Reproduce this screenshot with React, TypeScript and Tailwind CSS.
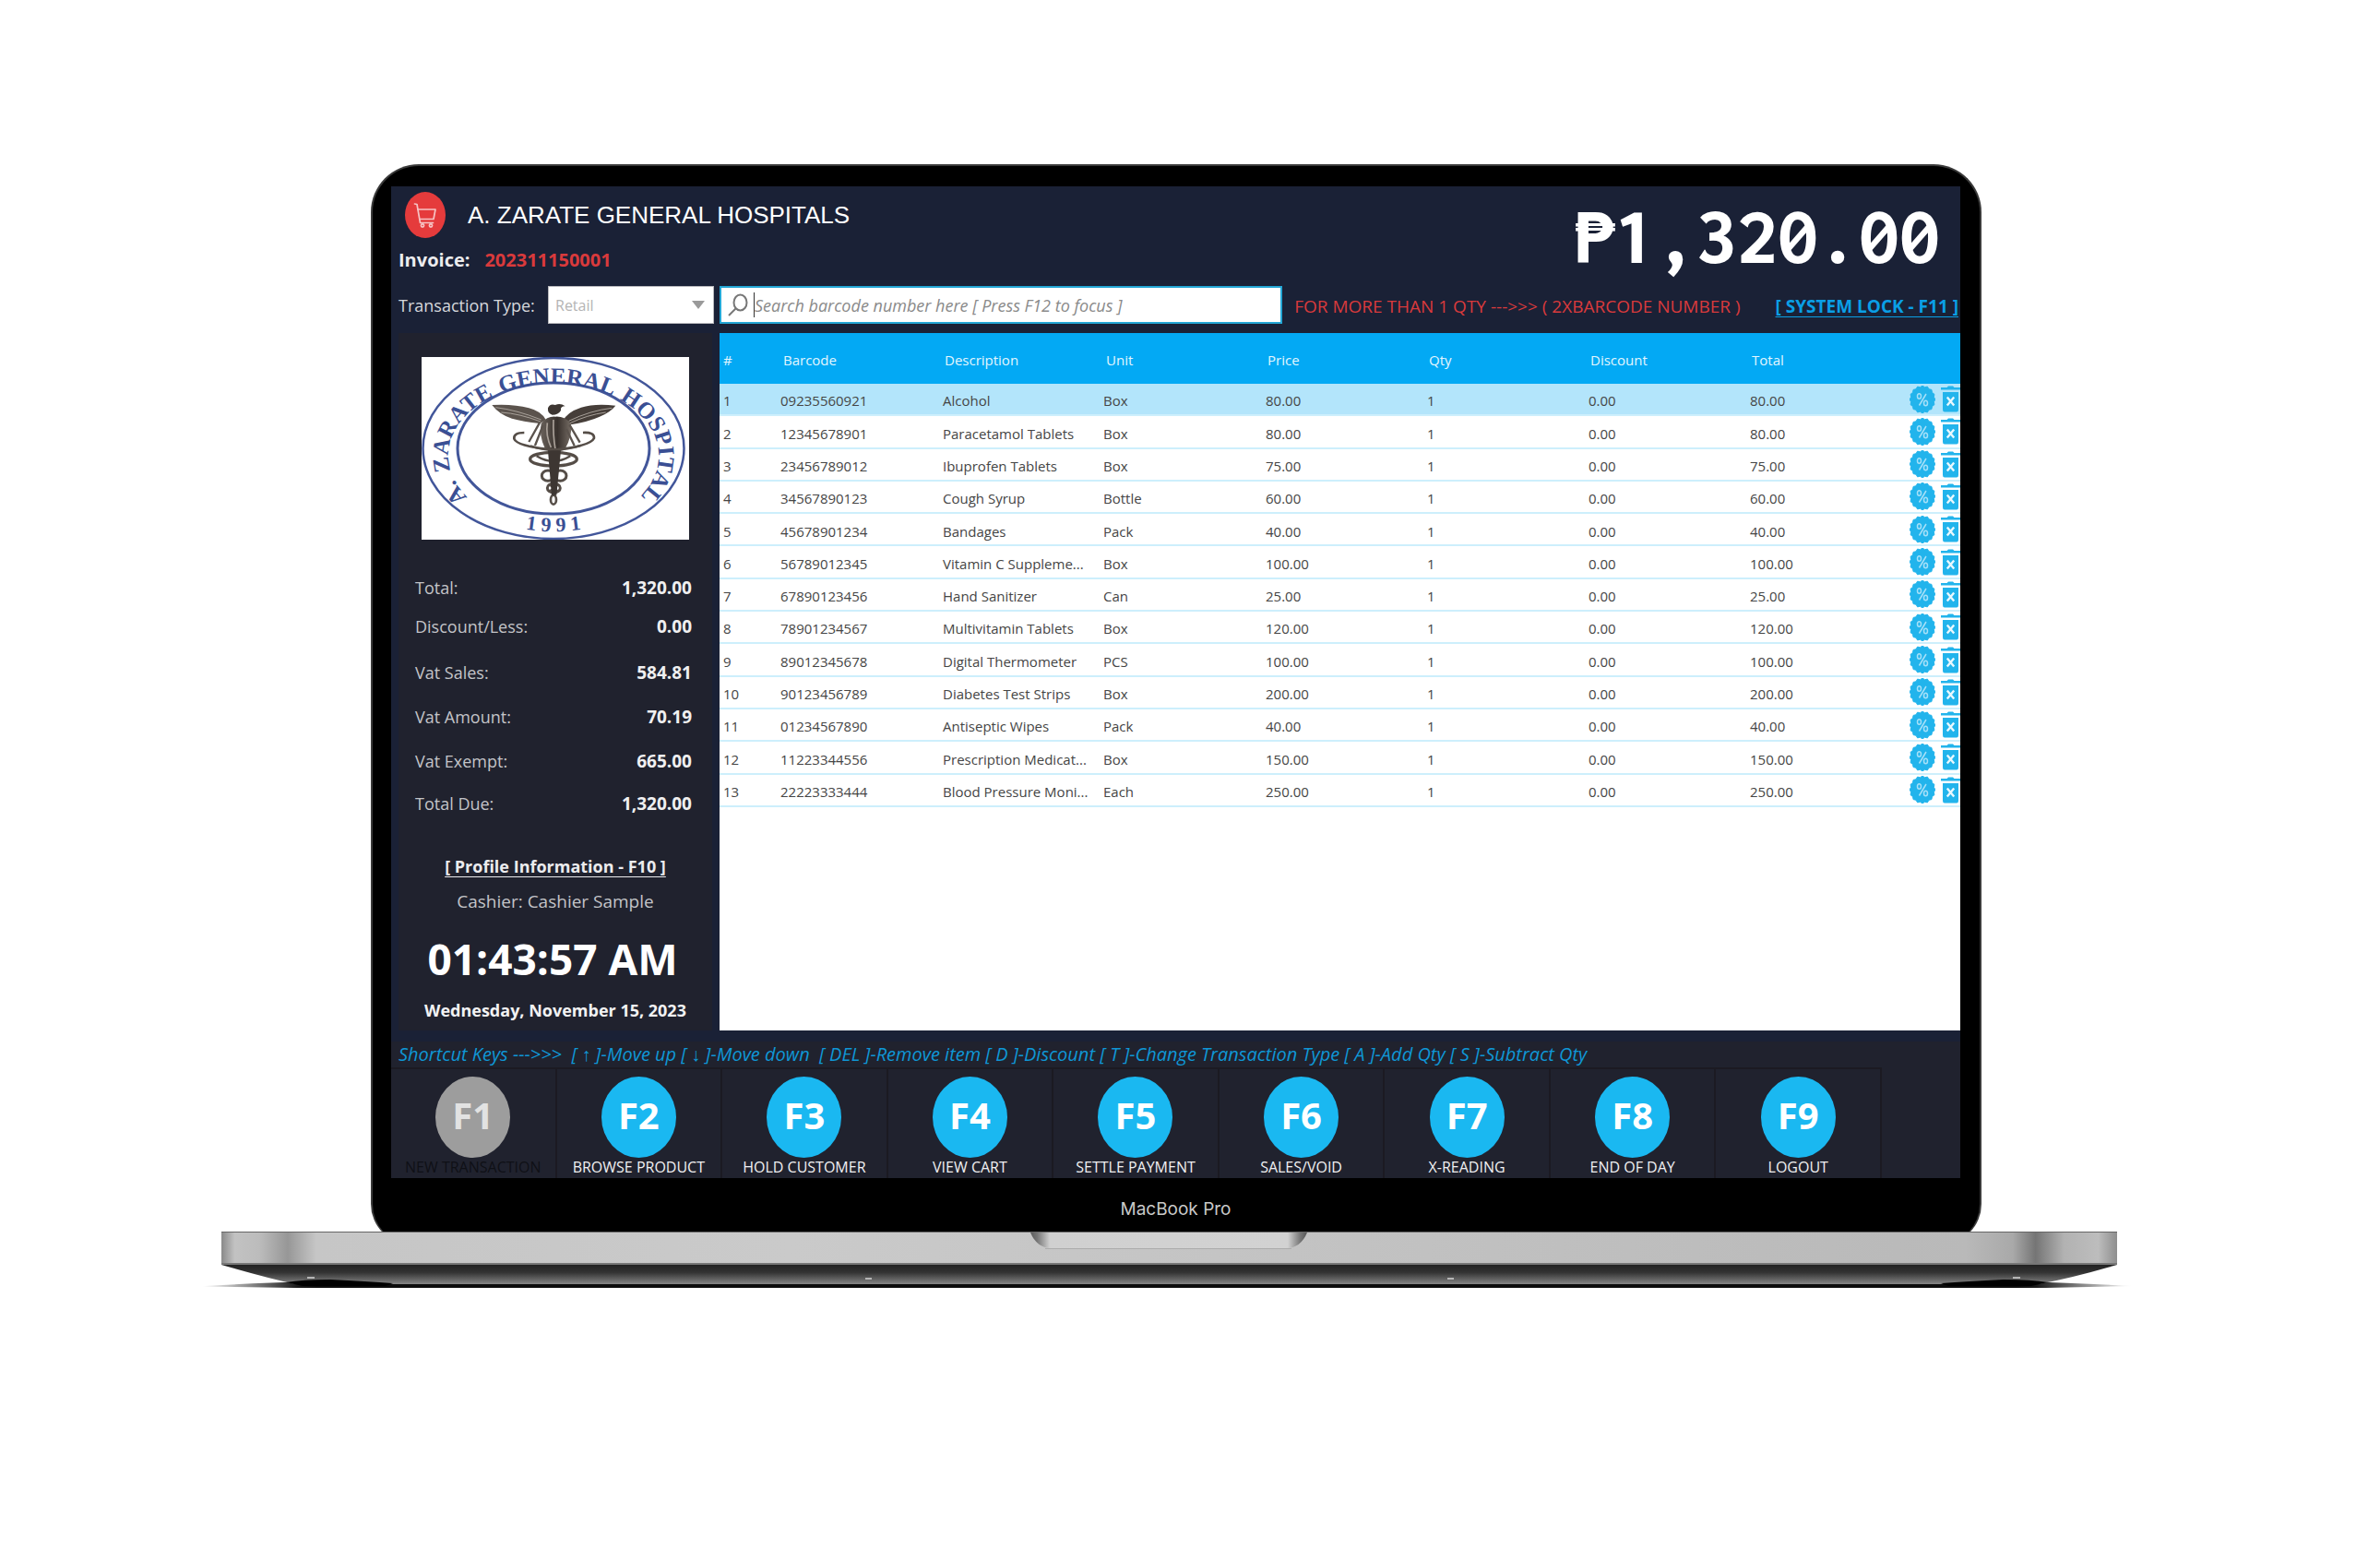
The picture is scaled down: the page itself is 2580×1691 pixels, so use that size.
import React from "react";

type Item = {
  barcode: string;
  description: string;
  unit: string;
  price: string;
};

const items: Item[] = [
  { barcode: "09235560921", description: "Alcohol", unit: "Box", price: "80.00" },
  { barcode: "12345678901", description: "Paracetamol Tablets", unit: "Box", price: "80.00" },
  { barcode: "23456789012", description: "Ibuprofen Tablets", unit: "Box", price: "75.00" },
  { barcode: "34567890123", description: "Cough Syrup", unit: "Bottle", price: "60.00" },
  { barcode: "45678901234", description: "Bandages", unit: "Pack", price: "40.00" },
  { barcode: "56789012345", description: "Vitamin C Suppleme...", unit: "Box", price: "100.00" },
  { barcode: "67890123456", description: "Hand Sanitizer", unit: "Can", price: "25.00" },
  { barcode: "78901234567", description: "Multivitamin Tablets", unit: "Box", price: "120.00" },
  { barcode: "89012345678", description: "Digital Thermometer", unit: "PCS", price: "100.00" },
  { barcode: "90123456789", description: "Diabetes Test Strips", unit: "Box", price: "200.00" },
  { barcode: "01234567890", description: "Antiseptic Wipes", unit: "Pack", price: "40.00" },
  { barcode: "11223344556", description: "Prescription Medicat...", unit: "Box", price: "150.00" },
  { barcode: "22223333444", description: "Blood Pressure Moni...", unit: "Each", price: "250.00" },
];

const columns = ["Barcode", "Description", "Unit", "Price", "Qty", "Discount", "Total"];

const totals = [
  { label: "Total:", value: "1,320.00", gap: "" },
  { label: "Discount/Less:", value: "0.00", gap: "mt-[18px]" },
  { label: "Vat Sales:", value: "584.81", gap: "mt-[26px]" },
  { label: "Vat Amount:", value: "70.19", gap: "mt-6" },
  { label: "Vat Exempt:", value: "665.00", gap: "mt-6" },
  { label: "Total Due:", value: "1,320.00", gap: "mt-[22px]" },
];

const functionKeys = [
  { key: "F1", label: "NEW TRANSACTION", disabled: true },
  { key: "F2", label: "BROWSE PRODUCT" },
  { key: "F3", label: "HOLD CUSTOMER" },
  { key: "F4", label: "VIEW CART" },
  { key: "F5", label: "SETTLE PAYMENT" },
  { key: "F6", label: "SALES/VOID" },
  { key: "F7", label: "X-READING" },
  { key: "F8", label: "END OF DAY" },
  { key: "F9", label: "LOGOUT" },
];

const badgePoints = Array.from({ length: 32 }, (_, i) => {
  const r = i % 2 === 0 ? 1 : 0.9;
  const a = (i * Math.PI) / 16;
  return `${(14 + 14 * r * Math.sin(a)).toFixed(1)},${(15 - 15 * r * Math.cos(a)).toFixed(1)}`;
}).join(" ");

function DiscountIcon() {
  return (
    <svg viewBox="0 0 28 30" className="h-[30px] w-7" aria-hidden="true">
      <polygon points={badgePoints} fill="#22b4ec" stroke="#22b4ec" strokeLinejoin="round" />
      <g fill="none" stroke="#a6e0f8" strokeWidth="1.5">
        <path d="M18 9 L10.500 21.500" />
        <ellipse cx="10.500" cy="11.500" rx="2" ry="2.800" />
        <ellipse cx="17.500" cy="19" rx="2" ry="2.800" />
      </g>
    </svg>
  );
}

function TrashIcon() {
  return (
    <svg viewBox="0 0 21 29" className="h-[29px] w-[21px]" aria-hidden="true">
      <path d="M0 2 H6.500 L8 .5 H13 L14.500 2 H21 V4.500 H0 Z" fill="#22b4ec" />
      <path d="M2 7 H19 V26 Q19 28.500 17 28.500 H4 Q2 28.500 2 26 Z" fill="#22b4ec" />
      <path d="M6.800 12.500 L14.200 21.500 M14.200 12.500 L6.800 21.500" stroke="#e9f8fe" strokeWidth="2.4" />
    </svg>
  );
}

function CartIcon() {
  return (
    <svg viewBox="0 0 44 50" className="h-[50px] w-11 shrink-0" role="img" aria-label="Cart">
      <ellipse cx="22" cy="25" rx="22" ry="25" fill="#e53b3c" />
      <g fill="none" stroke="#f6c3c3" strokeWidth="1.7" strokeLinejoin="round" strokeLinecap="round">
        <path d="M10.500 13 L13 13.500 L16.500 33.500 H30.500" />
        <path d="M14 19 H33 L31 29.500 H16" />
        <circle cx="19" cy="36.500" r="1.600" />
        <circle cx="28" cy="36.500" r="1.600" />
      </g>
    </svg>
  );
}

function HospitalSeal() {
  return (
    <svg viewBox="0 0 290 198" className="w-full bg-white" role="img" aria-label="A. Zarate General Hospital 1991">
      <defs>
        <path id="seal-top" d="M50 152 A114 78 0 1 1 236 152" />
        <path id="seal-bottom" d="M30 147 A134 91 0 0 0 256 147" />
        <linearGradient id="bronze" x1="0" x2="1">
          <stop offset="0" stopColor="#6b635c" />
          <stop offset=".55" stopColor="#37302c" />
          <stop offset="1" stopColor="#766d65" />
        </linearGradient>
      </defs>
      <g fill="none" stroke="#42569a">
        <ellipse cx="143" cy="99" rx="141.500" ry="98" strokeWidth="2.5" />
        <ellipse cx="143" cy="99" rx="104" ry="71" strokeWidth="3" />
      </g>
      <g fill="#3a4f94" fontFamily="'Liberation Serif', serif" fontWeight="700" fontSize="25" textAnchor="middle">
        <text><textPath href="#seal-top" startOffset="3%">A.</textPath></text>
        <text><textPath href="#seal-top" startOffset="21%">ZARATE</textPath></text>
        <text><textPath href="#seal-top" startOffset="51%">GENERAL</textPath></text>
        <text><textPath href="#seal-top" startOffset="84%">HOSPITAL</textPath></text>
        <text fontSize="22"><textPath href="#seal-bottom" startOffset="50%">1 9 9 1</textPath></text>
      </g>
      <g transform="translate(-57 -32) scale(.3333)">
        <path d="M400 252 Q470 248 520 262 Q560 272 575 300 L556 312 Q500 306 465 296 Q425 284 400 252 Z" fill="#5b534d" />
        <path d="M802 254 Q735 246 690 260 Q645 275 632 302 L655 316 Q715 306 750 290 Q785 276 802 254 Z" fill="#463e39" />
        <path d="M412 260 Q480 268 560 300 M430 276 Q490 280 558 306 M790 262 Q720 270 650 304 M770 276 Q710 284 652 312" fill="none" stroke="#a8a19a" strokeWidth="3" />
        <path d="M582 262 Q588 246 606 252 Q622 244 638 256 Q622 256 624 270 Q616 284 596 284 Q580 280 582 262 Z" fill="#3d3632" />
        <path d="M560 312 Q580 288 606 290 Q636 288 656 312 Q664 350 636 398 Q604 408 572 392 Q552 350 560 312 Z" fill="url(#bronze)" />
        <path d="M556 308 L520 372 M566 318 L540 384 M652 316 L686 374 M642 330 L668 384" stroke="#5b534d" strokeWidth="7" fill="none" />
        <path d="M580 310 Q574 350 592 390 M600 300 Q598 350 606 396" stroke="#aaa199" strokeWidth="5" fill="none" />
        <g fill="none" stroke="#554d47">
          <path d="M505 342 Q470 342 472 362 Q480 386 600 398 Q720 386 732 360 Q734 340 696 342" strokeWidth="8" />
          <path d="M525 385 Q600 412 690 384" strokeWidth="7" />
          <ellipse cx="600" cy="428" rx="76" ry="22" strokeWidth="10" />
          <path d="M545 418 Q600 452 655 418" strokeWidth="7" />
          <ellipse cx="582" cy="482" rx="20" ry="17" strokeWidth="9" />
          <ellipse cx="622" cy="482" rx="20" ry="17" strokeWidth="9" />
          <ellipse cx="601" cy="522" rx="21" ry="15" strokeWidth="9" />
          <path d="M584 510 L618 534 M618 510 L584 534" strokeWidth="6" />
          <ellipse cx="600" cy="560" rx="9" ry="15" strokeWidth="8" />
        </g>
        <path d="M582 400 L624 400 L610 545 L594 545 Z" fill="#3d3632" />
      </g>
    </svg>
  );
}

function LaptopBase() {
  return (
    <svg viewBox="0 0 2096 64" preserveAspectRatio="none" className="relative -mt-[14px] block h-16 w-full" aria-hidden="true">
      <defs>
        <linearGradient id="deck" x1="0" x2="1">
          <stop offset="0" stopColor="#8a8a8a" />
          <stop offset=".007" stopColor="#c2c2c2" />
          <stop offset=".02" stopColor="#bcbcbc" />
          <stop offset=".035" stopColor="#979797" />
          <stop offset=".05" stopColor="#c6c6c6" />
          <stop offset=".3" stopColor="#cacaca" />
          <stop offset=".6" stopColor="#c2c2c2" />
          <stop offset=".92" stopColor="#b9b9b9" />
          <stop offset=".945" stopColor="#a9a9a9" />
          <stop offset=".957" stopColor="#757575" />
          <stop offset=".972" stopColor="#b2b2b2" />
          <stop offset=".99" stopColor="#bdbdbd" />
          <stop offset="1" stopColor="#8e8e8e" />
        </linearGradient>
        <linearGradient id="under" x1="0" x2="0" y1="0" y2="1">
          <stop offset="0" stopColor="#222" />
          <stop offset=".4" stopColor="#333" />
          <stop offset="1" stopColor="#858585" />
        </linearGradient>
        <linearGradient id="contact" x1="0" x2="1">
          <stop offset="0" stopColor="#000" stopOpacity="0" />
          <stop offset=".05" stopColor="#000" stopOpacity=".9" />
          <stop offset=".06" stopColor="#0c0c0c" />
          <stop offset=".94" stopColor="#0c0c0c" />
          <stop offset=".95" stopColor="#000" stopOpacity=".9" />
          <stop offset="1" stopColor="#000" stopOpacity="0" />
        </linearGradient>
        <linearGradient id="notch" x1="0" x2="1">
          <stop offset="0" stopColor="#5a5a5a" />
          <stop offset=".025" stopColor="#777" />
          <stop offset=".07" stopColor="#d0d0d0" />
          <stop offset=".93" stopColor="#d2d2d2" />
          <stop offset=".975" stopColor="#777" />
          <stop offset="1" stopColor="#555" />
        </linearGradient>
      </defs>
      <path d="M0 59.500 Q50 56 120 54 H1970 Q2040 56 2094 59 L2000 61 H100 Z" fill="url(#contact)" />
      <path d="M22 36 H2077 Q2030 50 1992 57 H102 Q70 50 22 36 Z" fill="url(#under)" />
      <path d="M92 55 Q110 52 140 52 Q180 54 208 56 L200 59 H110 Z" fill="#000" />
      <path d="M2002 55 Q1984 52 1954 52 Q1914 54 1886 56 L1894 59 H1984 Z" fill="#000" />
      <rect x="22" y="1" width="2055" height="35" fill="url(#deck)" />
      <rect x="22" y="0" width="2055" height="1" fill="#666" />
      <rect x="22" y="34" width="2055" height="2" fill="#777" />
      <path d="M899 1 H1199 Q1192 18 1176 18 H922 Q906 18 899 1 Z" fill="url(#notch)" />
      <path d="M915 18.500 H1182" stroke="#acacac" strokeWidth="1" />
      <g fill="#b5b5b5">
        <rect x="115" y="49" width="8" height="2" />
        <rect x="720" y="50" width="7" height="2" />
        <rect x="1351" y="50" width="7" height="2" />
        <rect x="1964" y="49" width="8" height="2" />
      </g>
    </svg>
  );
}

function Header() {
  return (
    <header className="flex h-[106px] justify-between pr-[22px] pl-[15px]">
      <div className="pt-[6px]">
        <div className="flex items-center gap-6">
          <CartIcon />
          <h1 className="font-['Liberation_Sans',sans-serif] text-[26px] leading-8 text-white">
            A. ZARATE GENERAL HOSPITALS
          </h1>
        </div>
        <p className="mt-[10px] -ml-[7px] flex gap-4 text-xl leading-7 font-bold">
          <span className="text-[#ececee]">Invoice:</span>
          <span className="text-[#d93a3c]">202311150001</span>
        </p>
      </div>
      <output className="pt-2 font-['Inconsolata','Noto_Sans_Mono','DejaVu_Sans_Mono',monospace] text-[88px] leading-[92px] font-extrabold text-white">
        ₱1,320.00
      </output>
    </header>
  );
}

function Controls() {
  return (
    <div className="mt-[2px] flex h-[41px] items-center pr-[2px] pl-2">
      <label htmlFor="transaction-type" className="w-[162px] shrink-0 text-lg text-[#d5d7dc]">
        Transaction Type:
      </label>
      <div className="relative h-full w-[180px] shrink-0">
        <select
          id="transaction-type"
          disabled
          className="h-full w-full appearance-none border border-[#b9b9bd] bg-white pl-[7px] text-base text-[#b4b4b4] opacity-100"
        >
          <option>Retail</option>
        </select>
        <svg viewBox="0 0 14 9" className="pointer-events-none absolute top-4 right-[10px] h-[9px] w-[14px]" aria-hidden="true">
          <path d="M0 0 H14 L7 9 Z" fill="#9a9a9a" />
        </svg>
      </div>
      <div className="ml-[6px] flex h-full flex-1 items-center border-2 border-[#23a6d5] bg-white pl-[7px]">
        <svg viewBox="0 0 22 26" className="h-[26px] w-[22px] shrink-0" fill="none" stroke="#777" strokeWidth="2" aria-hidden="true">
          <ellipse cx="13.500" cy="10" rx="7" ry="8.500" />
          <path d="M8.500 16.500 L1 24" />
        </svg>
        <span className="ml-[6px] h-[27px] w-px shrink-0 bg-[#333]" />
        <input
          aria-label="Search barcode"
          placeholder="Search barcode number here [ Press F12 to focus ]"
          className="h-full min-w-0 flex-1 bg-transparent text-lg text-[#555] italic outline-none placeholder:text-[#8a8a8a] placeholder:opacity-100"
        />
      </div>
      <p className="ml-[13px] pt-[3px] text-[19px] whitespace-nowrap text-[#d93a3c]">
        FOR MORE THAN 1 QTY ---&gt;&gt;&gt; ( 2XBARCODE NUMBER )
      </p>
      <a href="#lock" className="ml-[38px] pt-[3px] text-[19px] font-bold whitespace-nowrap text-[#0a9fe6] underline underline-offset-4">
        [ SYSTEM LOCK - F11 ]
      </a>
    </div>
  );
}

function Sidebar() {
  return (
    <aside className="flex w-[340px] shrink-0 flex-col bg-[#20222e] pt-[26px] pb-[6px] text-[#c3c4c8]">
      <div className="mx-[25px]">
        <HospitalSeal />
      </div>
      <dl className="mt-10 pr-[22px] pl-[18px]">
        {totals.map((row) => (
          <div key={row.label} className={`flex justify-between leading-6 ${row.gap}`}>
            <dt className="text-lg leading-6">{row.label}</dt>
            <dd className="text-[19px] leading-6 font-bold text-[#f0f0f1]">{row.value}</dd>
          </div>
        ))}
      </dl>
      <a href="#profile" className="mt-10 text-center text-lg leading-8 font-bold text-[#ececee] underline underline-offset-4">
        [ Profile Information - F10 ]
      </a>
      <p className="mt-[6px] text-center text-[19px] leading-8">Cashier: Cashier Sample</p>
      <time className="mt-4 pr-[6px] text-center text-[46px] leading-[60px] font-bold text-white">01:43:57 AM</time>
      <p className="mt-[10px] text-center text-lg leading-8 font-bold text-[#f2f2f3]">Wednesday, November 15, 2023</p>
    </aside>
  );
}

function ItemsTable() {
  return (
    <section className="min-w-0 flex-1 bg-white">
      <table className="h-[514px] w-full table-fixed border-collapse text-left text-[15px] text-[#454545]">
        <thead>
          <tr className="h-[55px] bg-[#03a9f4] text-[#e4f6fe]">
            <th scope="col" className="w-[62px] pt-1 pl-1 font-normal">#</th>
            {columns.map((c) => (
              <th key={c} scope="col" className="pt-1 pl-[7px] font-normal">{c}</th>
            ))}
            <th scope="col" className="w-[58px]" aria-label="Actions" />
          </tr>
        </thead>
        <tbody>
          {items.map((item, i) => (
            <tr key={item.barcode} className={i === 0 ? "border-b-2 border-[#cdeffc] bg-[#b3e5fb]" : "border-b-2 border-[#cdeffc]"}>
              <td className="pt-1 pl-1">{i + 1}</td>
              <td className="pt-1 pl-1">{item.barcode}</td>
              <td className="pt-1 pl-[5px] whitespace-nowrap">{item.description}</td>
              <td className="pt-1 pl-1">{item.unit}</td>
              <td className="pt-1 pl-[5px]">{item.price}</td>
              <td className="pt-1 pl-[5px]">1</td>
              <td className="pt-1 pl-[5px]">0.00</td>
              <td className="pt-1 pl-[5px]">{item.price}</td>
              <td className="p-0">
                <div className="flex items-center gap-[6px] pl-[3px]">
                  <button type="button" aria-label={`Discount ${item.description}`}>
                    <DiscountIcon />
                  </button>
                  <button type="button" aria-label={`Remove ${item.description}`}>
                    <TrashIcon />
                  </button>
                </div>
              </td>
            </tr>
          ))}
        </tbody>
      </table>
    </section>
  );
}

function FunctionBar() {
  return (
    <footer className="mt-3 bg-[#20222e]">
      <p className="pl-2 text-xl leading-7 whitespace-pre text-[#0f97d6] italic">
        {"Shortcut Keys --->>>  [ ↑ ]-Move up [ ↓ ]-Move down  [ DEL ]-Remove item [ D ]-Discount [ T ]-Change Transaction Type [ A ]-Add Qty [ S ]-Subtract Qty"}
      </p>
      <div className="mr-[85px] grid grid-cols-9">
        {functionKeys.map((f) => (
          <button
            key={f.key}
            type="button"
            disabled={f.disabled}
            className="flex h-[120px] flex-col items-center border-t-2 border-r-2 border-[#1b1a22] pt-2"
          >
            <span
              className={
                f.disabled
                  ? "flex h-[88px] w-[81px] items-center justify-center rounded-[50%] bg-[#9d9d9d] pb-1 text-[40px] leading-none font-bold text-[#e2e2e2]"
                  : "flex h-[88px] w-[81px] items-center justify-center rounded-[50%] bg-[#1ab8f1] pb-1 text-[40px] leading-none font-bold text-white"
              }
            >
              {f.key}
            </span>
            <span
              className={
                f.disabled
                  ? "text-base leading-5 whitespace-nowrap text-[#0f1016]"
                  : "text-base leading-5 whitespace-nowrap text-[#f0f0f2]"
              }
            >
              {f.label}
            </span>
          </button>
        ))}
      </div>
    </footer>
  );
}

export default function App() {
  return (
    <div className="min-h-screen bg-white pt-[178px] pr-[266px] pl-[218px] font-['Open_Sans','Noto_Sans',sans-serif]">
      <div className="mr-[166px] ml-[184px] rounded-t-[52px] rounded-b-[44px] border-x-2 border-t-2 border-[#3a3a3a] bg-black pt-[22px] pr-[21px] pl-5">
        <main className="bg-[#1a2136]">
          <Header />
          <Controls />
          <div className="mt-[10px] flex gap-2 pl-2">
            <Sidebar />
            <ItemsTable />
          </div>
          <FunctionBar />
        </main>
        <p className="pt-[18px] pb-[22px] text-center font-['Inter',sans-serif] text-[19px] leading-8 text-[#c9c9c9]">MacBook Pro</p>
      </div>
      <LaptopBase />
    </div>
  );
}
